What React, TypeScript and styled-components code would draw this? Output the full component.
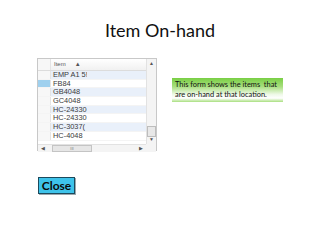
import React from "react";
import styled, { createGlobalStyle } from "styled-components";

const Global = createGlobalStyle`
  html, body { margin: 0; padding: 0; background: #ffffff; }
  body { width: 320px; height: 240px; overflow: hidden; }
`;

const Page = styled.div`
  width: 320px;
  height: 240px;
  display: flex;
  flex-direction: column;
  font-family: Lato, "Open Sans", sans-serif;
`;

const Title = styled.h1`
  margin: 18px 0 0 0;
  font-family: Lato, sans-serif;
  font-weight: 400;
  font-size: 18px;
  line-height: 24px;
  color: #111;
  text-align: center;
`;

const Body = styled.div`
  display: flex;
  align-items: flex-start;
  margin: 16px 0 0 37px;
  gap: 15px;
`;

const Grid = styled.div`
  width: 120px;
  height: 93px;
  border: 1px solid #c8c8c8;
  box-sizing: border-box;
  display: grid;
  grid-template-columns: 1fr 10px;
  grid-template-rows: 1fr 8px;
  background: #fff;
  font-family: "Liberation Sans", Arial, sans-serif;
`;

const Table = styled.div`
  display: flex;
  flex-direction: column;
  overflow: hidden;
`;

const HeaderRow = styled.div`
  display: flex;
  height: 11px;
  border-bottom: 1px solid #dcdcdc;
  background: linear-gradient(#ffffff, #f1f1f1);
`;

const Row = styled.div<{ $alt: boolean }>`
  display: flex;
  height: 8.7px;
  background: ${(p) => (p.$alt ? "#e9f0fa" : "#ffffff")};
  border-bottom: 1px solid #f4f4f4;
  box-sizing: border-box;
`;

const Selector = styled.div<{ $active?: boolean }>`
  width: 12px;
  flex: none;
  border-right: 1px solid #e4e4e4;
  background: ${(p) => (p.$active ? "#9fd0ee" : "#f7f7f7")};
`;

const Cell = styled.div`
  width: 34px;
  flex: none;
  overflow: hidden;
  white-space: nowrap;
  font-size: 7.4px;
  line-height: 8.7px;
  color: #3a3a3a;
  padding-left: 2px;
`;

const HeadCell = styled(Cell)`
  width: 40px;
  font-size: 6px;
  line-height: 11px;
  color: #555;
  padding-left: 3px;
  display: flex;
  gap: 9px;
`;

const VScroll = styled.div`
  background: #f4f4f4;
  border-left: 1px solid #e2e2e2;
  display: flex;
  flex-direction: column;
  align-items: center;
  justify-content: space-between;
  padding: 2px 0;
  box-sizing: border-box;
`;

const Thumb = styled.div`
  width: 7px;
  height: 9px;
  border: 1px solid #bdbdbd;
  background: #e8e8e8;
  margin-top: 60px;
`;

const Arrow = styled.div`
  font-size: 5px;
  line-height: 5px;
  color: #555;
`;

const HScroll = styled.div`
  background: #f4f4f4;
  border-top: 1px solid #e2e2e2;
  display: flex;
  align-items: center;
  padding: 0 3px;
  gap: 4px;
`;

const HThumb = styled.div`
  width: 38px;
  height: 5px;
  border: 1px solid #c4c4c4;
  background: #e6e6e6;
  margin-left: 3px;
  display: flex;
  align-items: center;
  justify-content: center;
  font-size: 4px;
  color: #777;
`;

const Spacer = styled.div`
  flex: 1;
`;

const Corner = styled.div`
  background: #f4f4f4;
`;

const Note = styled.div`
  margin-top: 20px;
  width: 111px;
  padding: 2px 3px;
  box-sizing: border-box;
  font-family: Lato, sans-serif;
  font-size: 7.4px;
  line-height: 10px;
  color: #111;
  background: linear-gradient(#79cf44 0%, #a6de7c 35%, #eef9e6 68%, #ffffff 84%, #a8df7e 100%);
  white-space: nowrap;
`;

const CloseButton = styled.button`
  margin: 26px 0 0 38px;
  width: 37px;
  height: 17px;
  padding: 0;
  align-self: flex-start;
  background: #3ec3ea;
  border: 1px solid #1c4a5c;
  box-shadow: 1px 1px 0 #9aa7ad;
  font-family: Lato, sans-serif;
  font-weight: 700;
  font-size: 12px;
  line-height: 15px;
  color: #0b0b0b;
`;

const items = [
  "EMP A1 5!",
  "FB84",
  "GB4048",
  "GC4048",
  "HC-24330",
  "HC-24330",
  "HC-3037(",
  "HC-4048",
];

export default function App() {
  return (
    <Page>
      <Global />
      <Title>Item On-hand</Title>
      <Body>
        <Grid>
          <Table>
            <HeaderRow>
              <Selector />
              <HeadCell>
                <span>Item</span>
                <span>▲</span>
              </HeadCell>
            </HeaderRow>
            {items.map((it, i) => (
              <Row key={i} $alt={i % 2 === 0}>
                <Selector $active={i === 1} />
                <Cell>{it}</Cell>
              </Row>
            ))}
          </Table>
          <VScroll>
            <Arrow>▲</Arrow>
            <Thumb />
            <Arrow>▼</Arrow>
          </VScroll>
          <HScroll>
            <Arrow>◀</Arrow>
            <HThumb>III</HThumb>
            <Spacer />
            <Arrow>▶</Arrow>
          </HScroll>
          <Corner />
        </Grid>
        <Note>
          This form shows the items&nbsp; that
          <br />
          are on-hand at that location.
        </Note>
      </Body>
      <CloseButton>Close</CloseButton>
    </Page>
  );
}
